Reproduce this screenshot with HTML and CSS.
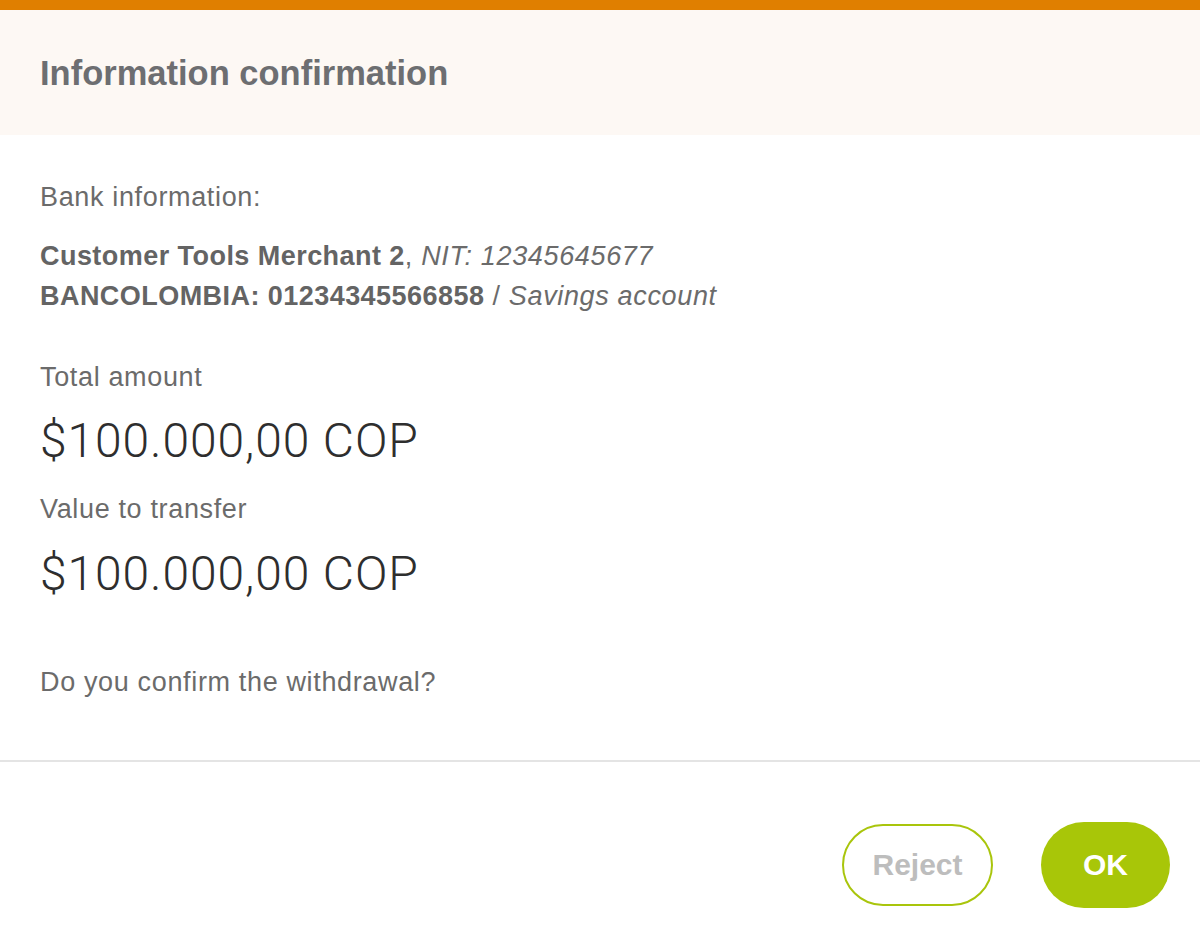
FILE: index.html
```html
<!DOCTYPE html>
<html lang="en">
<head>
<meta charset="utf-8">
<title>Information confirmation</title>
<link rel="stylesheet" href="styles.css">
</head>
<body>
<div class="modal">
  <header class="modal-header">
    <h1 class="modal-title">Information confirmation</h1>
  </header>
  <section class="modal-body">
    <p class="label">Bank information:</p>
    <div class="bank">
      <p class="bank-line"><strong>Customer Tools Merchant 2</strong>, <em>NIT: 12345645677</em></p>
      <p class="bank-line"><strong>BANCOLOMBIA: 01234345566858</strong> / <em>Savings account</em></p>
    </div>
    <p class="label label-total">Total amount</p>
    <p class="amount">$100.000,00 COP</p>
    <p class="label label-value">Value to transfer</p>
    <p class="amount">$100.000,00 COP</p>
    <p class="label label-question">Do you confirm the withdrawal?</p>
  </section>
  <footer class="modal-footer">
    <button class="btn btn-reject" type="button">Reject</button>
    <button class="btn btn-ok" type="button">OK</button>
  </footer>
</div>
</body>
</html>
```

FILE: styles.css
```css
html, body {
  margin: 0;
  padding: 0;
  background: #ffffff;
}

body {
  font-family: "Liberation Sans", Arial, sans-serif;
  color: #666666;
}

.modal {
  width: 1200px;
  min-height: 948px;
  border-top: 10px solid #e07f00;
  box-sizing: border-box;
  background: #ffffff;
}

.modal-header {
  height: 125px;
  background: #fdf8f4;
  display: flex;
  align-items: center;
  padding: 2px 40px 0;
  box-sizing: border-box;
}

.modal-title {
  margin: 0;
  font-size: 34.5px;
  font-weight: 700;
  color: #6d6e71;
}

.modal-body {
  padding: 42px 40px 58px;
  border-bottom: 2px solid #e4e4e4;
}

.modal-body p {
  margin: 0;
}

.label,
.bank-line {
  font-size: 27px;
  line-height: 40px;
  letter-spacing: 0.65px;
  color: #6b6b6b;
}

.bank {
  margin-top: 19px;
}

.bank-line strong {
  font-weight: 700;
  color: #646464;
  letter-spacing: 0.45px;
}

.bank-line em {
  font-style: italic;
}

.modal-body .label-total {
  margin-top: 41px;
}

.modal-body .amount {
  font-family: "Roboto", "Liberation Sans", sans-serif;
  font-weight: 300;
  font-size: 48px;
  line-height: 60px;
  letter-spacing: 0.9px;
  color: #2e2e2e;
  margin-top: 14px;
}

.modal-body .label-value {
  margin-top: 18px;
}

.modal-body .label-value + .amount {
  margin-top: 15px;
}

.modal-body .label-question {
  margin-top: 58px;
}

.modal-footer {
  display: flex;
  justify-content: flex-end;
  align-items: center;
  gap: 48px;
  padding: 60px 30px 0 0;
}

.btn {
  font-family: "Liberation Sans", Arial, sans-serif;
  font-weight: 700;
  font-size: 30px;
  border-radius: 999px;
  cursor: pointer;
  padding: 0;
}

.btn-reject {
  width: 151px;
  height: 82px;
  background: #ffffff;
  border: 2px solid #a9c50c;
  color: #bdbdbd;
}

.btn-ok {
  width: 129px;
  height: 86px;
  background: #a8c608;
  border: none;
  color: #ffffff;
}
```
